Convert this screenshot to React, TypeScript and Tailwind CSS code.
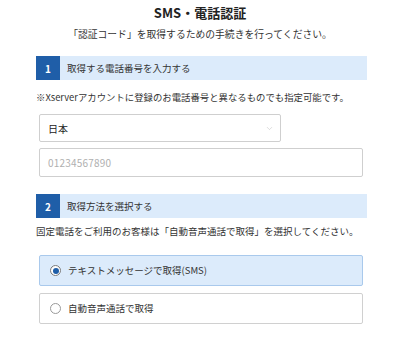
import { ChevronDown } from "lucide-react";

const font = { fontFamily: '"Noto Sans CJK JP", "Noto Sans", sans-serif' };

function StepHeader({ num, label }: { num: string; label: string }) {
  return (
    <div className="flex h-[24px] items-stretch bg-[#dcebfb]">
      <div className="flex w-[24px] items-center justify-center bg-[#1f5ea8] text-[10px] font-bold text-white">
        {num}
      </div>
      <div className="flex items-center pl-[7px] text-[9.5px] text-[#333]">{label}</div>
    </div>
  );
}

function RadioRow({ label, checked }: { label: string; checked?: boolean }) {
  return (
    <label
      className={`flex h-[31px] items-center gap-[7px] rounded-[2px] border pl-[10px] text-[9.5px] text-[#333] ${
        checked ? "border-[#a9c9ec] bg-[#dcebfb]" : "border-[#d0d0d0] bg-white"
      }`}
    >
      <span
        className={`flex h-[11px] w-[11px] items-center justify-center rounded-full border bg-white ${
          checked ? "border-[#7a7a7a]" : "border-[#9a9a9a]"
        }`}
      >
        {checked && <span className="h-[6px] w-[6px] rounded-full bg-[#1f5ea8]" />}
      </span>
      {label}
    </label>
  );
}

export default function App() {
  return (
    <div className="h-[339px] w-[400px] bg-white" style={font}>
      <h1 className="pt-[5px] text-center text-[13px] font-bold leading-[16px] text-[#222]">SMS・電話認証</h1>
      <p className="mt-[7px] text-center text-[9.8px] leading-[12px] text-[#333]">
        「認証コード」を取得するための手続きを行ってください。
      </p>

      <div className="ml-[36px] mt-[16px] w-[331px]">
        {/* Step 1 */}
        <StepHeader num="1" label="取得する電話番号を入力する" />
        <p className="mt-[11px] text-[9.4px] leading-[12px] text-[#333]">
          ※Xserverアカウントに登録のお電話番号と異なるものでも指定可能です。
        </p>

        <div className="ml-[3px] mt-[11px] w-[324px]">
          <div className="flex h-[28px] w-[242px] items-center justify-between rounded-[2px] border border-[#cfcfcf] bg-white pl-[8px] pr-[6px] text-[10px] text-[#222]">
            <span>日本</span>
            <ChevronDown size={9} strokeWidth={1.2} className="text-[#b5b5b5]" />
          </div>
          <div className="mt-[6px] flex h-[29px] items-center rounded-[2px] border border-[#cfcfcf] bg-white pl-[8px] text-[10px] tracking-[0.2px] text-[#b0b0b0]">
            01234567890
          </div>
        </div>

        {/* Step 2 */}
        <div className="mt-[17px]">
          <StepHeader num="2" label="取得方法を選択する" />
        </div>
        <p className="mt-[7px] text-[9.5px] leading-[12px] text-[#333]">
          固定電話をご利用のお客様は「自動音声通話で取得」を選択してください。
        </p>

        <div className="ml-[3px] mt-[18px] flex w-[324px] flex-col gap-[7px]">
          <RadioRow label="テキストメッセージで取得(SMS)" checked />
          <RadioRow label="自動音声通話で取得" />
        </div>
      </div>
    </div>
  );
}
